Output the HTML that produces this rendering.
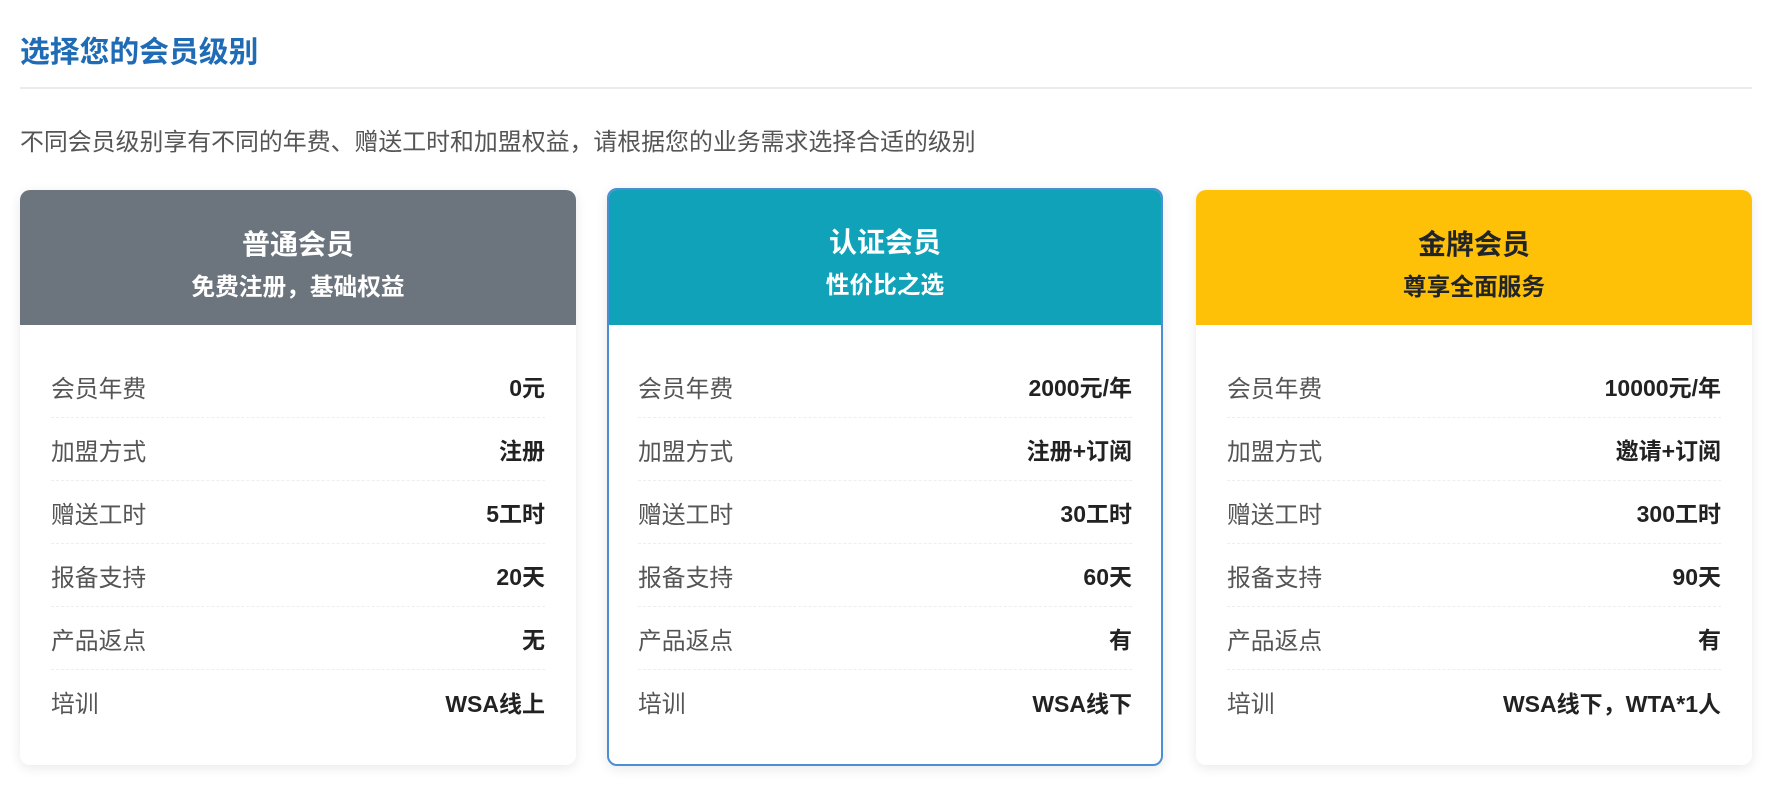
<!DOCTYPE html>
<html><head><meta charset="utf-8"><style>
*{box-sizing:border-box;margin:0;padding:0}
body{width:1770px;height:790px;background:#fff;font-family:"Liberation Sans","Noto Sans CJK SC",sans-serif;position:relative;overflow:hidden}
h1{position:absolute;left:20px;top:35px;font-size:29.8px;font-weight:bold;color:#1f6bb5;line-height:36px}
.rule{position:absolute;left:20px;width:1732px;top:87px;height:2px;background:#e9ecef}
.desc{position:absolute;left:20px;top:128px;font-size:23.9px;color:#555;line-height:30px;white-space:nowrap}
.card{position:absolute;top:190px;width:556px;height:575px;border-radius:10px;background:#fff;box-shadow:0 3px 12px rgba(0,0,0,.09);overflow:hidden}
.card.sel{top:188px;height:578px;border:2px solid #4a8fd3}
.hd{height:135px;text-align:center;color:#fff;font-weight:bold;padding-top:37px}
.sel .hd{height:135px;padding-top:35px}
.hd .t{font-size:28px;line-height:36px}
.hd .s{font-size:23.7px;line-height:30px;margin-top:10px}
.bd{padding:30px 31px 0 31px}
.row{height:63px;display:flex;justify-content:space-between;align-items:center;border-bottom:1px dashed #eee}
.row:last-child{border-bottom:none}
.row .l{font-size:23.8px;color:#555}
.row .v{font-size:23px;font-weight:bold;color:#222}
</style></head><body>
<h1>选择您的会员级别</h1>
<div class="rule"></div>
<div class="desc">不同会员级别享有不同的年费、赠送工时和加盟权益，请根据您的业务需求选择合适的级别</div>

<div class="card" style="left:20px">
<div class="hd" style="background:#6c757d"><div class="t">普通会员</div><div class="s">免费注册，基础权益</div></div>
<div class="bd">
<div class="row"><span class="l">会员年费</span><span class="v">0元</span></div>
<div class="row"><span class="l">加盟方式</span><span class="v">注册</span></div>
<div class="row"><span class="l">赠送工时</span><span class="v">5工时</span></div>
<div class="row"><span class="l">报备支持</span><span class="v">20天</span></div>
<div class="row"><span class="l">产品返点</span><span class="v">无</span></div>
<div class="row"><span class="l">培训</span><span class="v">WSA线上</span></div>
</div></div>

<div class="card sel" style="left:607px">
<div class="hd" style="background:#10a2b8"><div class="t">认证会员</div><div class="s">性价比之选</div></div>
<div class="bd" style="padding:30px 29px 0 29px">
<div class="row"><span class="l">会员年费</span><span class="v">2000元/年</span></div>
<div class="row"><span class="l">加盟方式</span><span class="v">注册+订阅</span></div>
<div class="row"><span class="l">赠送工时</span><span class="v">30工时</span></div>
<div class="row"><span class="l">报备支持</span><span class="v">60天</span></div>
<div class="row"><span class="l">产品返点</span><span class="v">有</span></div>
<div class="row"><span class="l">培训</span><span class="v">WSA线下</span></div>
</div></div>

<div class="card" style="left:1196px">
<div class="hd" style="background:#ffc107;color:#212529"><div class="t">金牌会员</div><div class="s">尊享全面服务</div></div>
<div class="bd">
<div class="row"><span class="l">会员年费</span><span class="v">10000元/年</span></div>
<div class="row"><span class="l">加盟方式</span><span class="v">邀请+订阅</span></div>
<div class="row"><span class="l">赠送工时</span><span class="v">300工时</span></div>
<div class="row"><span class="l">报备支持</span><span class="v">90天</span></div>
<div class="row"><span class="l">产品返点</span><span class="v">有</span></div>
<div class="row"><span class="l">培训</span><span class="v">WSA线下，WTA*1人</span></div>
</div></div>
</body></html>
